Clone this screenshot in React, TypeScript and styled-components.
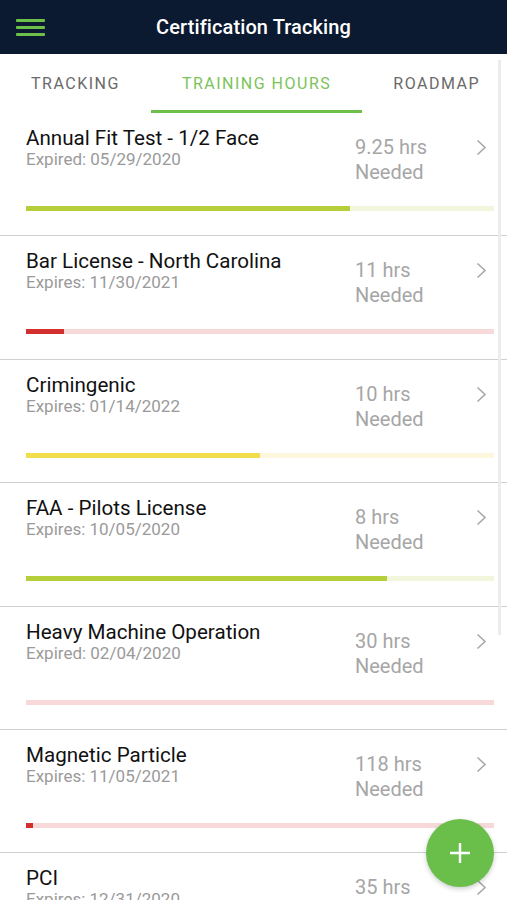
import React from 'react'
import styled, { createGlobalStyle } from 'styled-components'

const GlobalStyle = createGlobalStyle`
  html, body {
    margin: 0;
    padding: 0;
    background: #fff;
  }
  body {
    font-family: Roboto, "Noto Sans", "Liberation Sans", sans-serif;
  }
`

const Screen = styled.div`
  position: relative;
  width: 507px;
  height: 900px;
  overflow: hidden;
  display: flex;
  flex-direction: column;
  background: #fff;
`
const Header = styled.div`
  height: 54px;
  flex: none;
  background: #0b1a31;
  display: flex;
  align-items: center;
  justify-content: center;
  position: relative;
`
const MenuButton = styled.div`
  position: absolute;
  left: 16px;
  top: 19px;
  width: 29px;
  display: flex;
  flex-direction: column;
  gap: 4px;
`
const MenuLine = styled.span`
  display: block;
  height: 3px;
  background: #6cc04a;
  border-radius: 1px;
`
const Title = styled.h1`
  margin: 0;
  color: #fff;
  font-size: 20px;
  font-weight: 500;
  letter-spacing: 0.1px;
`
const TabBar = styled.div`
  height: 59px;
  flex: none;
  display: flex;
`
const Tab = styled.div<{ $active?: boolean }>`
  flex: none;
  padding: 3px 31px 0;
  display: flex;
  align-items: center;
  justify-content: center;
  font-size: 16px;
  letter-spacing: 1.5px;
  color: ${p => (p.$active ? '#7cc35a' : '#6a6a6a')};
  border-bottom: 3px solid ${p => (p.$active ? '#6cc04a' : 'transparent')};
  box-sizing: border-box;
`
const List = styled.div`
  display: flex;
  flex-direction: column;
`
const Item = styled.div`
  height: 123.4px;
  flex: none;
  box-sizing: border-box;
  border-bottom: 1px solid #cfcfcf;
  display: flex;
  flex-direction: column;
`
const Row = styled.div`
  height: 72px;
  box-sizing: border-box;
  padding: 14px 20px 0 26px;
  display: flex;
  align-items: flex-start;
`
const Info = styled.div`
  flex: 1;
  min-width: 0;
`
const Name = styled.div`
  font-size: 20.6px;
  line-height: 22px;
  color: #111;
`
const Expiry = styled.div`
  font-size: 17px;
  line-height: 21px;
  color: #9a9a9a;
`
const Hours = styled.div`
  width: 110px;
  margin-top: 8px;
  font-size: 20px;
  line-height: 25px;
  color: #a6a6a6;
`
const Chevron = styled.svg`
  margin-left: 11px;
  margin-top: 12px;
  flex: none;
`
const Track = styled.div<{ $track: string }>`
  margin: 21px 13px 0 26px;
  height: 5px;
  background: ${p => p.$track};
`
const Fill = styled.div<{ $fill: string }>`
  height: 100%;
  background: ${p => p.$fill};
`
const Fab = styled.div`
  position: absolute;
  left: 426px;
  top: 819px;
  width: 68px;
  height: 68px;
  border-radius: 50%;
  background: #6abf4b;
  box-shadow: 0 2px 5px rgba(0, 0, 0, 0.2);
  display: flex;
  align-items: center;
  justify-content: center;
`
const ScrollThumb = styled.div`
  position: absolute;
  left: 498px;
  top: 60px;
  width: 3px;
  height: 575px;
  background: #ececec;
`

type Tone = 'green' | 'red' | 'yellow'

const tones: Record<Tone, { fill: string; track: string }> = {
  green: { fill: '#b5cf3b', track: '#f1f6dc' },
  red: { fill: '#d32f2f', track: '#f8d9d9' },
  yellow: { fill: '#f2dd4c', track: '#fdf8dd' },
}

const certs: { name: string; expiry: string; hours: string; tone: Tone; pct: number }[] = [
  { name: 'Annual Fit Test - 1/2 Face', expiry: 'Expired: 05/29/2020', hours: '9.25 hrs', tone: 'green', pct: 69.2 },
  { name: 'Bar License - North Carolina', expiry: 'Expires: 11/30/2021', hours: '11 hrs', tone: 'red', pct: 8.1 },
  { name: 'Crimingenic', expiry: 'Expires: 01/14/2022', hours: '10 hrs', tone: 'yellow', pct: 50 },
  { name: 'FAA - Pilots License', expiry: 'Expires: 10/05/2020', hours: '8 hrs', tone: 'green', pct: 77.1 },
  { name: 'Heavy Machine Operation', expiry: 'Expired: 02/04/2020', hours: '30 hrs', tone: 'red', pct: 0 },
  { name: 'Magnetic Particle', expiry: 'Expires: 11/05/2021', hours: '118 hrs', tone: 'red', pct: 1.5 },
  { name: 'PCI', expiry: 'Expires: 12/31/2020', hours: '35 hrs', tone: 'green', pct: 40 },
]

export default function App() {
  return (
    <Screen>
      <GlobalStyle />
      <Header>
        <MenuButton>
          <MenuLine />
          <MenuLine />
          <MenuLine />
        </MenuButton>
        <Title>Certification Tracking</Title>
      </Header>
      <TabBar>
        <Tab>TRACKING</Tab>
        <Tab $active>TRAINING HOURS</Tab>
        <Tab>ROADMAP</Tab>
      </TabBar>
      <List>
        {certs.map(c => (
          <Item key={c.name}>
            <Row>
              <Info>
                <Name>{c.name}</Name>
                <Expiry>{c.expiry}</Expiry>
              </Info>
              <Hours>
                {c.hours}
                <br />
                Needed
              </Hours>
              <Chevron width="11" height="17" viewBox="0 0 11 17">
                <polyline points="1.5,1.5 9,8.5 1.5,15.5" fill="none" stroke="#a8a8a8" strokeWidth="1.6" />
              </Chevron>
            </Row>
            <Track $track={tones[c.tone].track}>
              <Fill $fill={tones[c.tone].fill} style={{ width: c.pct + '%' }} />
            </Track>
          </Item>
        ))}
      </List>
      <ScrollThumb />
      <Fab>
        <svg width="24" height="24" viewBox="0 0 24 24">
          <path d="M12 2v20M2 12h20" stroke="#fff" strokeWidth="2.4" />
        </svg>
      </Fab>
    </Screen>
  )
}
